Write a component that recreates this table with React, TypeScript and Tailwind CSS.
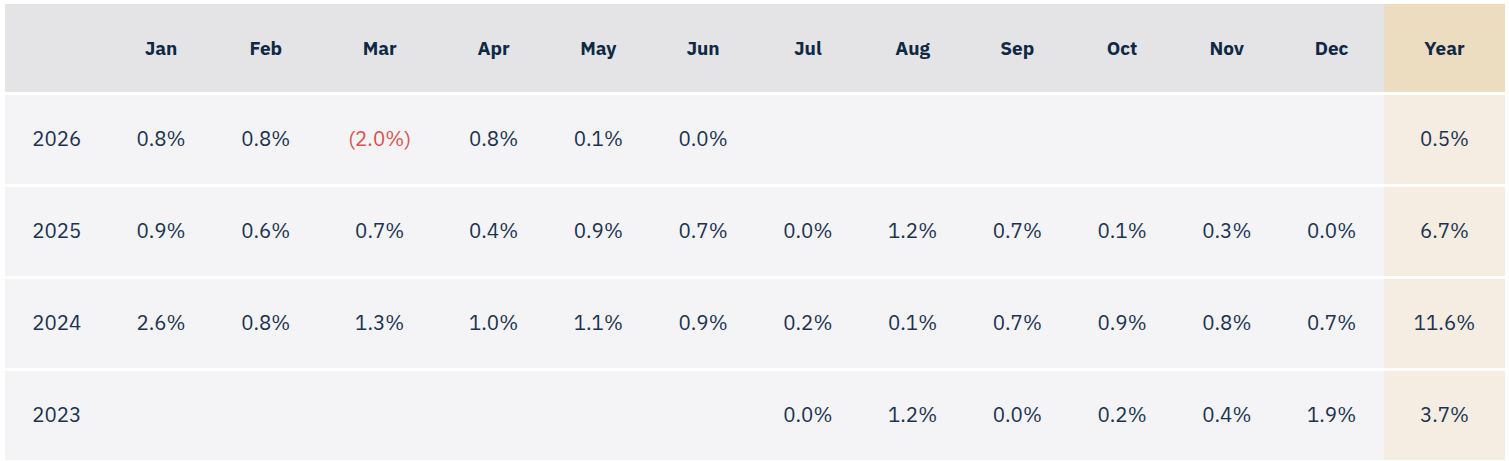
import React from 'react';

type Row = { year: string; months: (string | null)[]; total: string };

const MONTHS = ['Jan', 'Feb', 'Mar', 'Apr', 'May', 'Jun', 'Jul', 'Aug', 'Sep', 'Oct', 'Nov', 'Dec'];

const ROWS: Row[] = [
    { year: '2026', months: ['0.8%', '0.8%', '(2.0%)', '0.8%', '0.1%', '0.0%', null, null, null, null, null, null], total: '0.5%' },
    { year: '2025', months: ['0.9%', '0.6%', '0.7%', '0.4%', '0.9%', '0.7%', '0.0%', '1.2%', '0.7%', '0.1%', '0.3%', '0.0%'], total: '6.7%' },
    { year: '2024', months: ['2.6%', '0.8%', '1.3%', '1.0%', '1.1%', '0.9%', '0.2%', '0.1%', '0.7%', '0.9%', '0.8%', '0.7%'], total: '11.6%' },
    { year: '2023', months: [null, null, null, null, null, null, '0.0%', '1.2%', '0.0%', '0.2%', '0.4%', '1.9%'], total: '3.7%' },
];

// column widths follow the auto layout of the original table (Mar is wider)
const GRID = 'grid grid-cols-[103.6fr_repeat(2,104.7fr)_123fr_repeat(9,104.7fr)_121fr]';

export default function App() {
    return (
        <div className="bg-white min-h-[461px] pt-[4px] pl-[5px] pr-[4px] font-['IBM_Plex_Sans','Noto_Sans',sans-serif]">
            <div className="flex flex-col gap-[3px]">
                {/* --- Header --- */}
                <div className={`${GRID} h-[88px] bg-[#e4e4e7] text-[#0f2944] text-[19px] font-bold`}>
                    <div />
                    {MONTHS.map(m => (
                        <div key={m} className="flex items-center justify-center">{m}</div>
                    ))}
                    <div className="flex items-center justify-center bg-[#ecdcc0]">Year</div>
                </div>

                {/* --- Rows --- */}
                {ROWS.map(r => (
                    <div key={r.year} className={`${GRID} h-[89px] bg-[#f4f4f6] text-[#1b3350] text-[20.5px]`}>
                        <div className="flex items-center justify-center">{r.year}</div>
                        {r.months.map((v, i) => (
                            <div
                                key={i}
                                className={`flex items-center justify-center ${v && v.startsWith('(') ? 'text-[#d9534f]' : ''}`}
                            >
                                {v}
                            </div>
                        ))}
                        <div className="flex items-center justify-center bg-[#f5ede1]">{r.total}</div>
                    </div>
                ))}
            </div>
        </div>
    );
}
